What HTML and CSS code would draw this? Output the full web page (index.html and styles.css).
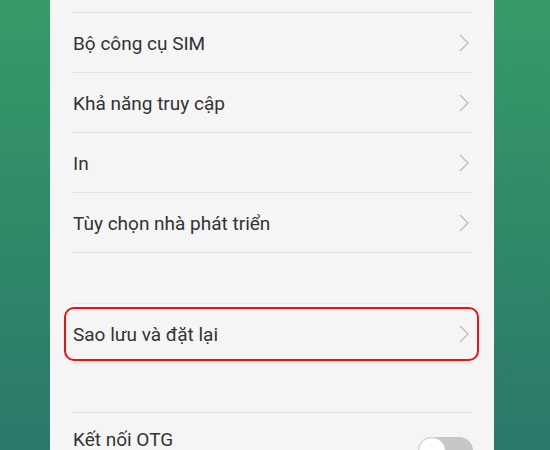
FILE: index.html
```html
<!DOCTYPE html>
<html>
<head>
<meta charset="utf-8">
<link rel="stylesheet" href="styles.css">
</head>
<body>
<div class="screen">
  <div class="panel">
    <div class="top-cut"></div>
    <div class="row"><span class="label">Bộ công cụ SIM</span><svg class="chev" viewBox="0 0 10 18"><path d="M1 1 L9 9 L1 17"/></svg></div>
    <div class="row"><span class="label">Khả năng truy cập</span><svg class="chev" viewBox="0 0 10 18"><path d="M1 1 L9 9 L1 17"/></svg></div>
    <div class="row"><span class="label">In</span><svg class="chev" viewBox="0 0 10 18"><path d="M1 1 L9 9 L1 17"/></svg></div>
    <div class="row"><span class="label">Tùy chọn nhà phát triển</span><svg class="chev" viewBox="0 0 10 18"><path d="M1 1 L9 9 L1 17"/></svg></div>
    <div class="gap"></div>
    <div class="row hl"><span class="label">Sao lưu và đặt lại</span><svg class="chev" viewBox="0 0 10 18"><path d="M1 1 L9 9 L1 17"/></svg><div class="mark"></div></div>
    <div class="gap2"></div>
    <div class="row last"><span class="label">Kết nối OTG</span><div class="toggle"><div class="knob"></div></div></div>
  </div>
</div>
</body>
</html>
```
FILE: styles.css
```css
html, body {
  margin: 0;
  padding: 0;
  width: 550px;
  height: 450px;
  overflow: hidden;
}
.screen {
  width: 550px;
  height: 450px;
  background: linear-gradient(to bottom, #399a68 0%, #2f8a68 50%, #2b786c 100%);
  display: flex;
  justify-content: center;
  padding-left: 0;
}
.panel {
  margin-left: 50px;
  width: 444px;
  height: 450px;
  background: #f5f5f5;
  display: flex;
  flex-direction: column;
  padding: 0 22px;
  box-sizing: border-box;
  font-family: Roboto, "Noto Sans", sans-serif;
  margin-right: 56px;
}
.top-cut {
  height: 12px;
  border-bottom: 1px solid #e3e3e3;
  flex: none;
}
.row {
  position: relative;
  height: 59px;
  flex: none;
  border-bottom: 1px solid #e3e3e3;
  display: flex;
  align-items: center;
  justify-content: space-between;
}
.label {
  font-size: 19px;
  color: #333333;
  padding-left: 1px;
  padding-top: 1px;
}
.chev {
  width: 10px;
  height: 18px;
  margin-right: 3px;
}
.chev path {
  fill: none;
  stroke: #bdbdbd;
  stroke-width: 1.3;
}
.gap {
  height: 50px;
  flex: none;
  border-bottom: 1px solid #e8e8e8;
}
.hl {
  border-bottom-color: #ececec;
}
.mark {
  position: absolute;
  left: -8px;
  right: -7px;
  top: 3px;
  bottom: 2px;
  border: 2px solid #ee1111;
  border-radius: 10px;
}
.gap2 {
  height: 48px;
  flex: none;
  border-bottom: 1px solid #e3e3e3;
}
.last {
  border-bottom: none;
  align-items: flex-start;
}
.last .label {
  padding-top: 15px;
}
.toggle {
  margin-top: 24px;
  width: 55px;
  height: 28px;
  border-radius: 14px;
  background: #c6c6c6;
  position: relative;
  margin-right: -1px;
}
.knob {
  position: absolute;
  left: 0;
  top: 0;
  width: 28px;
  height: 28px;
  box-sizing: border-box;
  border-radius: 50%;
  background: #ffffff;
  border: 1px solid #d0d0d0;
}
```
